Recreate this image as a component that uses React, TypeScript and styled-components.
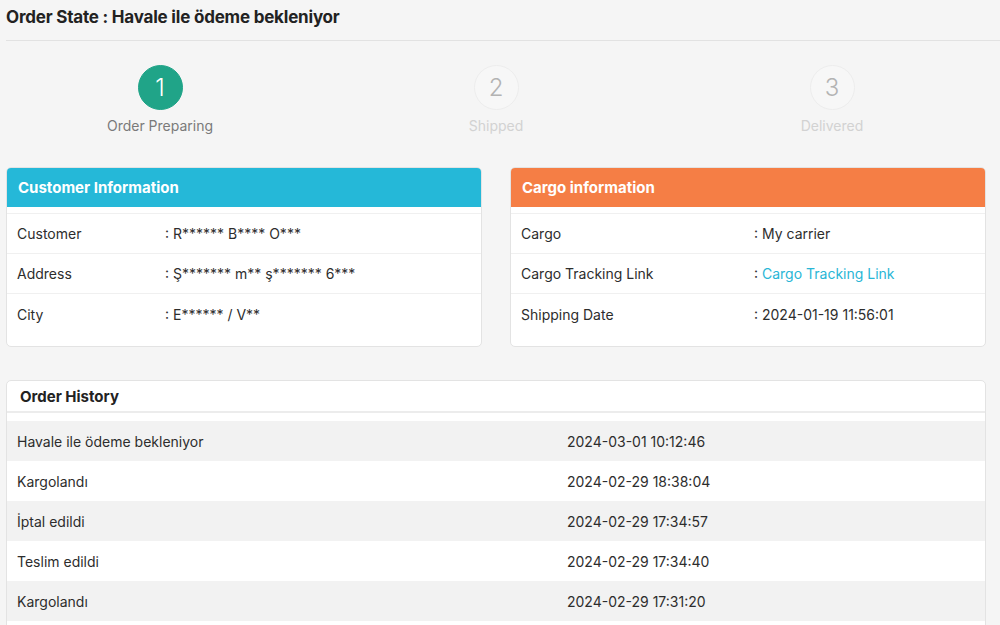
import React from "react";
import styled, { createGlobalStyle } from "styled-components";

const GlobalStyle = createGlobalStyle`
  * { box-sizing: border-box; }
  body {
    margin: 0;
    background: #f5f5f5;
    font-family: "Inter", "Liberation Sans", sans-serif;
    color: #333;
    overflow: hidden;
  }
`;

const steps = [
  { id: 1, label: "Order Preparing", active: true },
  { id: 2, label: "Shipped", active: false },
  { id: 3, label: "Delivered", active: false },
];

const customerRows = [
  { label: "Customer", value: "R****** B**** O***" },
  { label: "Address", value: "Ş******* m** ş******* 6***" },
  { label: "City", value: "E****** / V**" },
];

const cargoRows = [
  { label: "Cargo", value: "My carrier" },
  { label: "Cargo Tracking Link", value: "Cargo Tracking Link", link: true },
  { label: "Shipping Date", value: "2024-01-19 11:56:01" },
];

const history = [
  { state: "Havale ile ödeme bekleniyor", date: "2024-03-01 10:12:46" },
  { state: "Kargolandı", date: "2024-02-29 18:38:04" },
  { state: "İptal edildi", date: "2024-02-29 17:34:57" },
  { state: "Teslim edildi", date: "2024-02-29 17:34:40" },
  { state: "Kargolandı", date: "2024-02-29 17:31:20" },
];

const App = () => {
  return (
    <>
      <GlobalStyle />
      <Page>
        <TitleBar>
          <Title>Order State : Havale ile ödeme bekleniyor</Title>
        </TitleBar>

        <Steps>
          {steps.map((s) => (
            <Step key={s.id}>
              <StepCircle $active={s.active}>{s.id}</StepCircle>
              <StepLabel $active={s.active}>{s.label}</StepLabel>
            </Step>
          ))}
        </Steps>

        <CardRow>
          <Card>
            <CardHead $color="#25b8d8">Customer Information</CardHead>
            <InfoTable>
              {customerRows.map((r) => (
                <InfoRow key={r.label} $labelWidth={148}>
                  <span>{r.label}</span>
                  <span>: {r.value}</span>
                </InfoRow>
              ))}
            </InfoTable>
          </Card>
          <Card>
            <CardHead $color="#f57e45">Cargo information</CardHead>
            <InfoTable>
              {cargoRows.map((r) => (
                <InfoRow key={r.label} $labelWidth={233}>
                  <span>{r.label}</span>
                  <span>
                    : {r.link ? <TrackLink href="#">{r.value}</TrackLink> : r.value}
                  </span>
                </InfoRow>
              ))}
            </InfoTable>
          </Card>
        </CardRow>

        <HistoryCard>
          <HistoryHead>Order History</HistoryHead>
          <HistoryList>
            {history.map((h, i) => (
              <HistoryRow key={i} $striped={i % 2 === 0}>
                <span>{h.state}</span>
                <span>{h.date}</span>
              </HistoryRow>
            ))}
          </HistoryList>
        </HistoryCard>
      </Page>
    </>
  );
};

export default App;

const Page = styled.div`
  width: 1000px;
  padding: 7px 14px 0 6px;
  display: flex;
  flex-direction: column;
`;

const TitleBar = styled.div`
  margin-right: -14px;
  height: 34px;
  border-bottom: 1px solid #e2e2e2;
`;

const Title = styled.h1`
  margin: 0;
  font-size: 17px;
  line-height: 20px;
  font-weight: 700;
  color: #222;
  letter-spacing: -0.2px;
`;

const Steps = styled.div`
  display: grid;
  grid-template-columns: repeat(3, 1fr);
  margin: 24px -14px 0 -14px;
`;

const Step = styled.div`
  display: flex;
  flex-direction: column;
  align-items: center;
`;

const StepCircle = styled.div<{ $active: boolean }>`
  width: 45px;
  height: 45px;
  border-radius: 50%;
  display: flex;
  align-items: center;
  justify-content: center;
  font-size: 24px;
  font-weight: 300;
  background: ${(p) => (p.$active ? "#20a488" : "#f7f7f7")};
  color: ${(p) => (p.$active ? "#ffffff" : "#b3b3b3")};
  border: 1px solid ${(p) => (p.$active ? "#20a488" : "#ededed")};
`;

const StepLabel = styled.div<{ $active: boolean }>`
  margin-top: 7px;
  font-size: 14px;
  line-height: 18px;
  color: ${(p) => (p.$active ? "#7a7a7a" : "#d2d2d2")};
`;

const CardRow = styled.div`
  display: grid;
  grid-template-columns: 1fr 1fr;
  gap: 28px;
  margin-top: 32px;
`;

const Card = styled.div`
  background: #fff;
  border: 1px solid #e3e3e3;
  border-radius: 5px;
  overflow: hidden;
  height: 180px;
`;

const CardHead = styled.div<{ $color: string }>`
  background: ${(p) => p.$color};
  color: #fff;
  height: 39px;
  padding: 0 11px;
  display: flex;
  align-items: center;
  font-size: 15px;
  font-weight: 700;
`;

const InfoTable = styled.div`
  margin-top: 6px;
  border-top: 1px solid #f0f0f0;
`;

const InfoRow = styled.div<{ $labelWidth: number }>`
  display: grid;
  grid-template-columns: ${(p) => p.$labelWidth}px 1fr;
  height: 40px;
  align-items: center;
  padding: 0 10px;
  font-size: 14px;
  color: #2d2d2d;
  border-bottom: 1px solid #f0f0f0;

  &:last-child {
    border-bottom: none;
  }
`;

const TrackLink = styled.a`
  color: #29b6d6;
  text-decoration: none;
`;

const HistoryCard = styled.div`
  margin-top: 33px;
  background: #fff;
  border: 1px solid #e3e3e3;
  border-radius: 5px;
  overflow: hidden;
`;

const HistoryHead = styled.div`
  height: 32px;
  padding: 0 13px;
  display: flex;
  align-items: center;
  font-size: 15px;
  font-weight: 700;
  color: #222;
  border-bottom: 2px solid #ececec;
`;

const HistoryList = styled.div`
  margin-top: 8px;
  padding-bottom: 40px;
`;

const HistoryRow = styled.div<{ $striped: boolean }>`
  display: grid;
  grid-template-columns: 550px 1fr;
  height: 40px;
  align-items: center;
  padding: 0 10px;
  font-size: 14px;
  color: #2d2d2d;
  background: ${(p) => (p.$striped ? "#f2f2f2" : "#ffffff")};
`;
